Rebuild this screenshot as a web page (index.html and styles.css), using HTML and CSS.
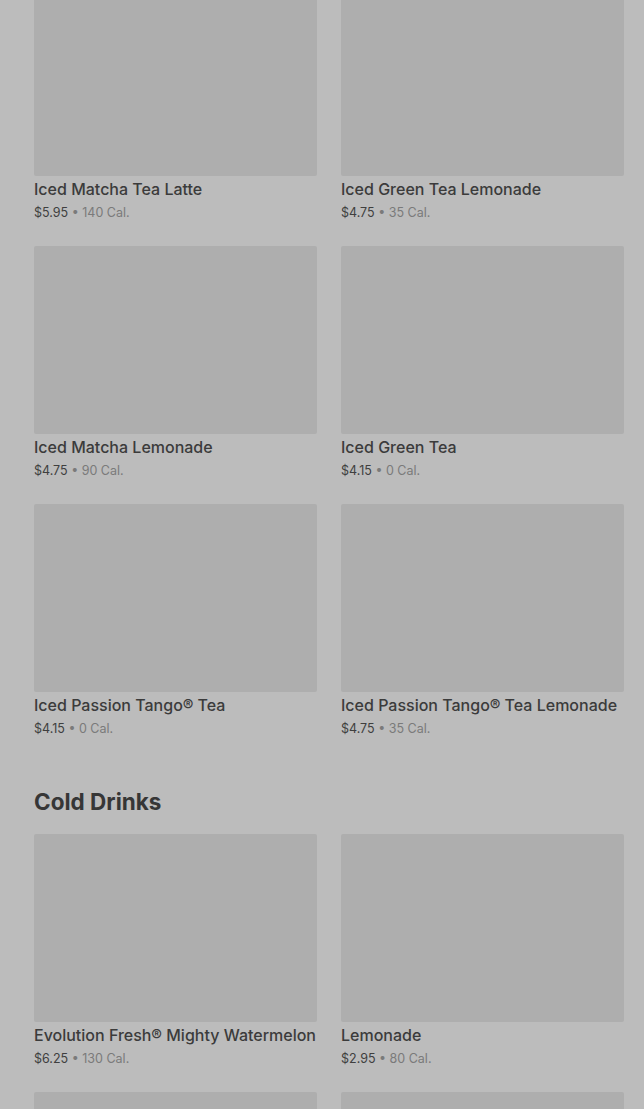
FILE: index.html
```html
<!DOCTYPE html>
<html>
<head>
  <title>Menu</title>
  <link rel="stylesheet" href="styles.css">
</head>
<body>

<div class="page">
  <div class="grid first">
    <div class="item">
      <div class="thumb"></div>
      <p class="name">Iced Matcha Tea Latte</p>
      <p class="meta"><span class="price">$5.95</span> • 140 Cal.</p>
    </div>
    <div class="item">
      <div class="thumb"></div>
      <p class="name">Iced Green Tea Lemonade</p>
      <p class="meta"><span class="price">$4.75</span> • 35 Cal.</p>
    </div>
    <div class="item">
      <div class="thumb"></div>
      <p class="name">Iced Matcha Lemonade</p>
      <p class="meta"><span class="price">$4.75</span> • 90 Cal.</p>
    </div>
    <div class="item">
      <div class="thumb"></div>
      <p class="name">Iced Green Tea</p>
      <p class="meta"><span class="price">$4.15</span> • 0 Cal.</p>
    </div>
    <div class="item">
      <div class="thumb"></div>
      <p class="name">Iced Passion Tango® Tea</p>
      <p class="meta"><span class="price">$4.15</span> • 0 Cal.</p>
    </div>
    <div class="item">
      <div class="thumb"></div>
      <p class="name">Iced Passion Tango® Tea Lemonade</p>
      <p class="meta"><span class="price">$4.75</span> • 35 Cal.</p>
    </div>
  </div>

  <h2 class="section-title">Cold Drinks</h2>

  <div class="grid">
    <div class="item">
      <div class="thumb"></div>
      <p class="name">Evolution Fresh® Mighty Watermelon</p>
      <p class="meta"><span class="price">$6.25</span> • 130 Cal.</p>
    </div>
    <div class="item">
      <div class="thumb"></div>
      <p class="name">Lemonade</p>
      <p class="meta"><span class="price">$2.95</span> • 80 Cal.</p>
    </div>
    <div class="item">
      <div class="thumb"></div>
    </div>
    <div class="item">
      <div class="thumb"></div>
    </div>
  </div>
</div>

</body>
</html>
```

FILE: styles.css
```css
html, body {
  margin: 0;
  background: #bcbcbc;
  font-family: "Inter", "Liberation Sans", sans-serif;
  overflow: hidden;
}

.page {
  padding: 0 20px 0 34px;
}

.grid {
  display: grid;
  grid-template-columns: 1fr 1fr;
  column-gap: 24px;
  row-gap: 23px;
}

.grid.first {
  margin-top: -12px;
}

.thumb {
  height: 188px;
  background: #aeaeae;
  border-radius: 2px;
}

.name {
  margin: 3px 0 0;
  font-size: 16px;
  line-height: 20px;
  font-weight: 500;
  color: #3b3b3b;
  white-space: nowrap;
}

.meta {
  margin: 4px 0 0;
  font-size: 12.5px;
  line-height: 20px;
  color: #7a7a7a;
}

.price {
  color: #3f3f3f;
}

.section-title {
  margin: 49px 0 18px;
  font-size: 22.5px;
  line-height: 28px;
  font-weight: 700;
  color: #363636;
}
```
